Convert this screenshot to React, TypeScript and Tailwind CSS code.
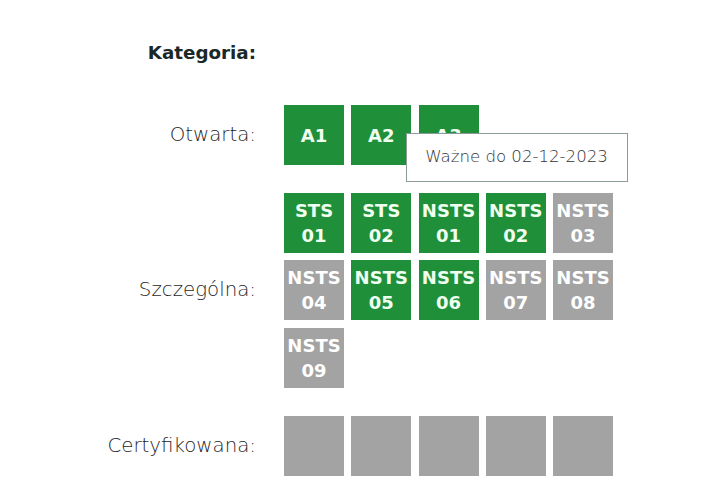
import React from "react"

type Tile = { label?: string[]; on: boolean }

const green = "bg-[#1f8f39] text-[#effff0]"
const gray = "bg-[#a3a3a3] text-white"

function Box({ tile, children }: { tile: Tile; children?: React.ReactNode }) {
  return (
    <div
      className={`relative w-[60px] h-[60px] flex flex-col items-center justify-center font-bold text-[18px] leading-[25px] ${
        tile.on ? green : gray
      }`}
    >
      {tile.label?.map((line) => (
        <span key={line}>{line}</span>
      ))}
      {children}
    </div>
  )
}

function Row({ label, tiles, bold }: { label: string; tiles?: React.ReactNode; bold?: boolean }) {
  return (
    <div className="grid grid-cols-[256px_332px] gap-x-[28px] items-center">
      <div
        className={
          bold
            ? "text-right font-bold text-[18.3px] leading-[24px] text-[#1a2828]"
            : "text-right font-extralight text-[19.8px] text-[#1f1f1f]"
        }
      >
        {label}
      </div>
      <div>{tiles}</div>
    </div>
  )
}

const special: Tile[] = [
  { label: ["STS", "01"], on: true },
  { label: ["STS", "02"], on: true },
  { label: ["NSTS", "01"], on: true },
  { label: ["NSTS", "02"], on: true },
  { label: ["NSTS", "03"], on: false },
  { label: ["NSTS", "04"], on: false },
  { label: ["NSTS", "05"], on: true },
  { label: ["NSTS", "06"], on: true },
  { label: ["NSTS", "07"], on: false },
  { label: ["NSTS", "08"], on: false },
  { label: ["NSTS", "09"], on: false },
]

export default function App() {
  return (
    <div className="w-[714px] h-[500px] bg-white pt-[41px] font-['DejaVu_Sans',sans-serif]">
      <Row label="Kategoria:" bold />

      <div className="mt-[40px]">
        <Row
          label="Otwarta:"
          tiles={
            <div className="flex gap-[7.25px]">
              <Box tile={{ label: ["A1"], on: true }} />
              <Box tile={{ label: ["A2"], on: true }} />
              <Box tile={{ label: ["A3"], on: true }}>
                {/* tooltip */}
                <div className="absolute left-[-13px] top-[28px] z-10 w-[222px] h-[49px] bg-white border border-[#8c9a9a] flex items-center justify-center font-extralight text-[16.6px] leading-none text-[#333]">
                  Ważne do 02-12-2023
                </div>
              </Box>
            </div>
          }
        />
      </div>

      <div className="mt-[28px]">
        <Row
          label="Szczególna:"
          tiles={
            <div className="flex flex-wrap gap-[7.25px]">
              {special.map((t, i) => (
                <Box key={i} tile={t} />
              ))}
            </div>
          }
        />
      </div>

      <div className="mt-[28px]">
        <Row
          label="Certyfikowana:"
          tiles={
            <div className="flex gap-[7.25px]">
              {[1, 2, 3, 4, 5].map((i) => (
                <Box key={i} tile={{ on: false }} />
              ))}
            </div>
          }
        />
      </div>
    </div>
  )
}
